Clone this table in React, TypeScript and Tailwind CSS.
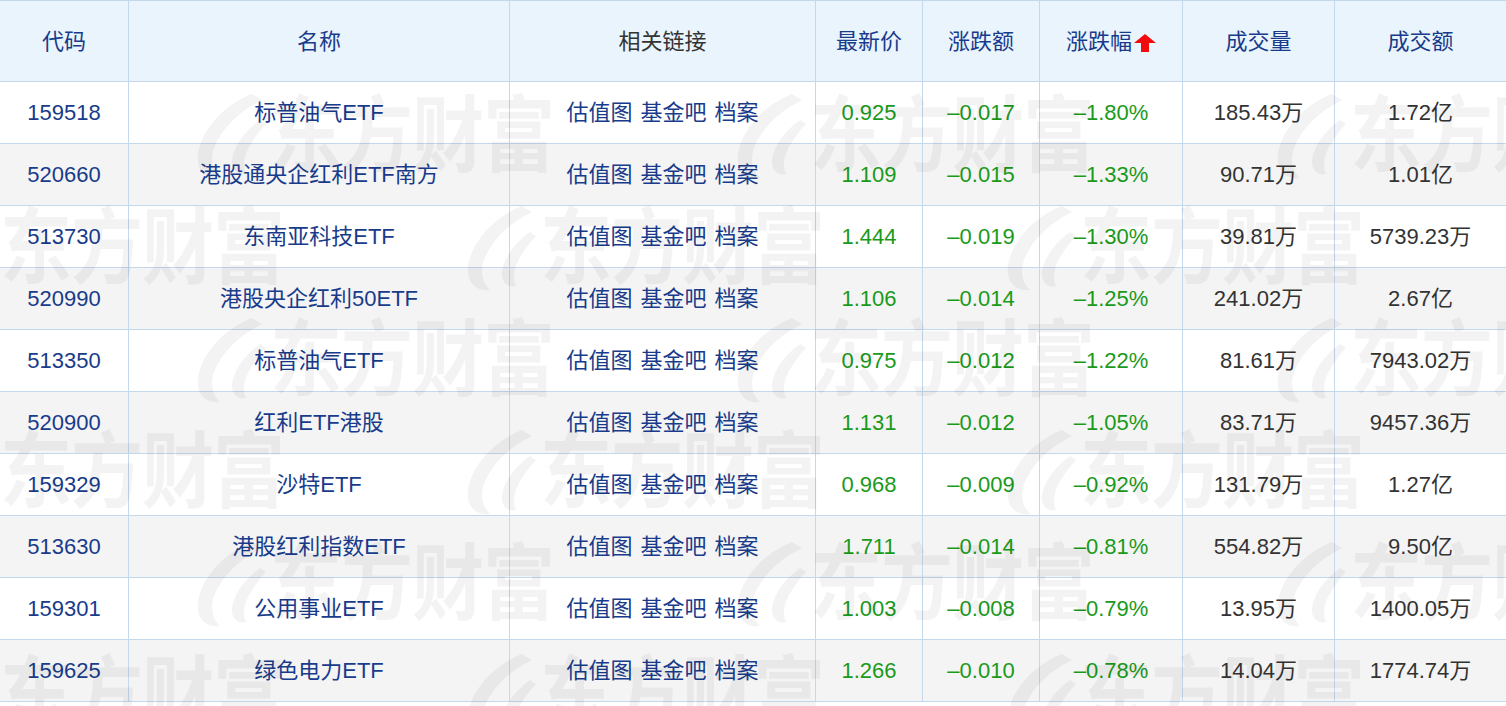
import React from "react";

type Row = {
  code: string;
  name: string;
  price: string;
  chg: string;
  pct: string;
  vol: string;
  amt: string;
};

const rows: Row[] = [
  { code: "159518", name: "标普油气ETF", price: "0.925", chg: "–0.017", pct: "–1.80%", vol: "185.43万", amt: "1.72亿" },
  { code: "520660", name: "港股通央企红利ETF南方", price: "1.109", chg: "–0.015", pct: "–1.33%", vol: "90.71万", amt: "1.01亿" },
  { code: "513730", name: "东南亚科技ETF", price: "1.444", chg: "–0.019", pct: "–1.30%", vol: "39.81万", amt: "5739.23万" },
  { code: "520990", name: "港股央企红利50ETF", price: "1.106", chg: "–0.014", pct: "–1.25%", vol: "241.02万", amt: "2.67亿" },
  { code: "513350", name: "标普油气ETF", price: "0.975", chg: "–0.012", pct: "–1.22%", vol: "81.61万", amt: "7943.02万" },
  { code: "520900", name: "红利ETF港股", price: "1.131", chg: "–0.012", pct: "–1.05%", vol: "83.71万", amt: "9457.36万" },
  { code: "159329", name: "沙特ETF", price: "0.968", chg: "–0.009", pct: "–0.92%", vol: "131.79万", amt: "1.27亿" },
  { code: "513630", name: "港股红利指数ETF", price: "1.711", chg: "–0.014", pct: "–0.81%", vol: "554.82万", amt: "9.50亿" },
  { code: "159301", name: "公用事业ETF", price: "1.003", chg: "–0.008", pct: "–0.79%", vol: "13.95万", amt: "1400.05万" },
  { code: "159625", name: "绿色电力ETF", price: "1.266", chg: "–0.010", pct: "–0.78%", vol: "14.04万", amt: "1774.74万" },
];

const gridCols = "grid grid-cols-[129px_381px_306px_107px_117px_143px_152px_171px]";
const cell = "flex items-center justify-center border-r border-[#c4d8ec] whitespace-nowrap";
const cellLast = "flex items-center justify-center whitespace-nowrap";

// watermark tiles, positioned relative to the body area (top = 82px)
const marks: { x: number; y: number }[] = [];
for (let r = 0; r < 6; r++) {
  const y = 8 + r * 112;
  const offset = r % 2 === 0 ? 190 : -80;
  for (let c = 0; c < 4; c++) {
    marks.push({ x: offset + c * 540, y });
  }
}

function Swoosh() {
  return (
    <svg width="78" height="92" viewBox="0 0 78 92" className="shrink-0">
      <path
        d="M62 4 C36 14 12 38 8 64 C6 80 16 90 30 88 C22 80 20 70 24 58 C32 38 48 22 72 10 Z M70 30 C54 42 44 56 42 70 C41 80 48 86 56 84 C52 76 54 64 62 52 C66 46 70 40 76 34 Z"
        fill="currentColor"
      />
    </svg>
  );
}

function SortArrow() {
  return (
    <svg width="22" height="18" viewBox="0 0 22 18" className="ml-[2px] mt-[4px]">
      <polygon points="11,0 22,9 15,9 15,18 7,18 7,9 0,9" fill="#f20c0c" />
    </svg>
  );
}

export default function App() {
  return (
    <div className="relative w-[1506px] h-[706px] overflow-hidden bg-white font-['Liberation_Sans','Noto_Sans_CJK_SC',sans-serif] text-[22px]">
      <div className="border-t border-[#c4d8ec]">
        <div className={`${gridCols} h-[81px] bg-[#e9f4fd] border-b border-[#c4d8ec] text-[#183b8b]`}>
          <div className={cell}>代码</div>
          <div className={cell}>名称</div>
          <div className={`${cell} text-[#333333]`}>相关链接</div>
          <div className={cell}>最新价</div>
          <div className={cell}>涨跌额</div>
          <div className={cell}>
            <span>涨跌幅</span>
            <SortArrow />
          </div>
          <div className={cell}>成交量</div>
          <div className={cellLast}>成交额</div>
        </div>
        {rows.map((r, i) => (
          <div
            key={r.code + i}
            className={`${gridCols} h-[62px] border-b border-[#c4d8ec] ${i % 2 === 1 ? "bg-[#f4f4f4]" : "bg-white"}`}
          >
            <div className={`${cell} text-[#183b8b]`}>{r.code}</div>
            <div className={`${cell} text-[#183b8b]`}>{r.name}</div>
            <div className={`${cell} text-[#183b8b] gap-[8px]`}>
              <span>估值图</span>
              <span>基金吧</span>
              <span>档案</span>
            </div>
            <div className={`${cell} text-[#1a9a1a]`}>{r.price}</div>
            <div className={`${cell} text-[#1a9a1a]`}>{r.chg}</div>
            <div className={`${cell} text-[#1a9a1a]`}>{r.pct}</div>
            <div className={`${cell} text-[#333333]`}>{r.vol}</div>
            <div className={`${cellLast} text-[#333333]`}>{r.amt}</div>
          </div>
        ))}
      </div>
      <div
        aria-hidden="true"
        className="pointer-events-none absolute left-0 right-0 top-[82px] bottom-0 overflow-hidden text-black opacity-[0.045] select-none"
      >
        {marks.map((m, i) => (
          <div
            key={i}
            className="absolute flex w-[400px] items-center whitespace-nowrap"
            style={{ left: m.x, top: m.y }}
          >
            <Swoosh />
            <span className="ml-[2px] inline-block shrink-0 origin-center scale-y-[1.15] text-[72px] font-bold leading-none tracking-[-1px]">
              东方财富
            </span>
          </div>
        ))}
      </div>
    </div>
  );
}
